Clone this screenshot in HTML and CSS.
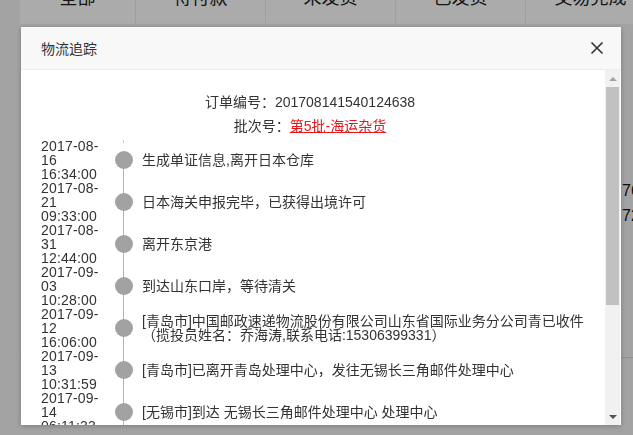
FILE: index.html
```html
<!DOCTYPE html>
<html lang="zh-CN">
<head>
    <meta charset="UTF-8">
    <meta name="viewport" content="width=device-width, initial-scale=1.0">
    <title>物流追踪</title>
    <link rel="stylesheet" href="styles.css">
</head>
<body>
    <!-- 订单列表页（被遮罩盖住） -->
    <div class="page">
        <ul class="tabs">
            <li>全部</li>
            <li>待付款</li>
            <li>未发货</li>
            <li>已发货</li>
            <li>交易完成</li>
        </ul>
        <div class="orders">
            <div class="order-row"><span></span><span class="price">76.00</span></div>
            <div class="order-row"><span></span><span class="price">72.00</span></div>
            <div class="order-sep"></div>
        </div>
    </div>

    <div class="mask"></div>

    <!-- 物流追踪弹窗 -->
    <div class="dialog">
        <div class="dialog-head">
            <span class="dialog-title">物流追踪</span>
            <span class="close">
                <svg width="14" height="14" viewBox="0 0 14 14"><path d="M1.5 1.5 L12.5 12.5 M12.5 1.5 L1.5 12.5" stroke="#333" stroke-width="1.6" fill="none"/></svg>
            </span>
        </div>
        <div class="dialog-body">
            <div class="dialog-content">
                <p class="info">订单编号：201708141540124638</p>
                <p class="info">批次号：<a href="#">第5批-海运杂货</a></p>

                <ul class="track">
                    <li class="track-item">
                        <div class="date">2017-08-<br>16<br>16:34:00</div>
                        <div class="node"><span class="dot"></span></div>
                        <div class="desc">生成单证信息,离开日本仓库</div>
                    </li>
                    <li class="track-item">
                        <div class="date">2017-08-<br>21<br>09:33:00</div>
                        <div class="node"><span class="dot"></span></div>
                        <div class="desc">日本海关申报完毕，已获得出境许可</div>
                    </li>
                    <li class="track-item">
                        <div class="date">2017-08-<br>31<br>12:44:00</div>
                        <div class="node"><span class="dot"></span></div>
                        <div class="desc">离开东京港</div>
                    </li>
                    <li class="track-item">
                        <div class="date">2017-09-<br>03<br>10:28:00</div>
                        <div class="node"><span class="dot"></span></div>
                        <div class="desc">到达山东口岸，等待清关</div>
                    </li>
                    <li class="track-item">
                        <div class="date">2017-09-<br>12<br>16:06:00</div>
                        <div class="node"><span class="dot"></span></div>
                        <div class="desc">[青岛市]中国邮政速递物流股份有限公司山东省国际业务分公司青已收件<br>（揽投员姓名：乔海涛,联系电话:15306399331）</div>
                    </li>
                    <li class="track-item">
                        <div class="date">2017-09-<br>13<br>10:31:59</div>
                        <div class="node"><span class="dot"></span></div>
                        <div class="desc">[青岛市]已离开青岛处理中心，发往无锡长三角邮件处理中心</div>
                    </li>
                    <li class="track-item">
                        <div class="date">2017-09-<br>14<br>06:11:33</div>
                        <div class="node"><span class="dot"></span></div>
                        <div class="desc">[无锡市]到达 无锡长三角邮件处理中心 处理中心</div>
                    </li>
                    <li class="track-item">
                        <div class="date">2017-09-<br>14<br>18:40:12</div>
                        <div class="node"><span class="dot"></span></div>
                        <div class="desc">[无锡市]已离开无锡长三角邮件处理中心</div>
                    </li>
                </ul>
            </div>
            <div class="scrollbar">
                <span class="sb-btn"><i class="arrow-up"></i></span>
                <span class="sb-track"><span class="sb-thumb"></span></span>
                <span class="sb-btn"><i class="arrow-down"></i></span>
            </div>
        </div>
    </div>
</body>
</html>
```

FILE: styles.css
```css
body {
    margin: 0;
    height: 435px;
    overflow: hidden;
    background-color: #f4f4f4;
    font-family: 'Liberation Sans', 'Noto Sans CJK SC', sans-serif;
    color: #333;
}

.page {
    width: 680px;
    padding-left: 20px;
}

.tabs {
    display: flex;
    margin: -22px 0 0 0;
    padding: 0;
    list-style: none;
    background-color: #fff;
}

.tabs li {
    width: 130px;
    height: 46px;
    line-height: 40px;
    text-align: center;
    font-size: 18px;
    color: #222;
    border-right: 1px solid #eee;
    box-sizing: border-box;
}

.tabs li:first-child {
    width: 116px;
}

.orders {
    padding-top: 154px;
}

.order-row {
    display: grid;
    grid-template-columns: 602px 1fr;
    height: 25px;
    line-height: 25px;
    font-size: 16px;
    color: #111;
}

.order-sep {
    margin-top: 129px;
    border-top: 1px solid #d8d8d8;
}

.mask {
    position: fixed;
    top: 0;
    left: 0;
    right: 0;
    bottom: 0;
    background-color: rgba(0, 0, 0, 0.33);
}

.dialog {
    position: fixed;
    top: 27px;
    left: 21px;
    width: 600px;
    height: 398px;
    background-color: #fff;
    box-shadow: 0 1px 6px rgba(0, 0, 0, 0.25);
    display: flex;
    flex-direction: column;
}

.dialog-head {
    height: 42px;
    flex: none;
    display: flex;
    align-items: center;
    justify-content: space-between;
    padding: 0 17px 0 20px;
    background-color: #f8f8f8;
    border-bottom: 1px solid #ececec;
}

.dialog-title {
    font-size: 14px;
    color: #333;
}

.close {
    display: flex;
    cursor: pointer;
}

.dialog-body {
    flex: 1;
    display: flex;
    min-height: 0;
}

.dialog-content {
    flex: 1;
    overflow: hidden;
    padding: 20px 0 0 20px;
}

.info {
    margin: 0;
    line-height: 24px;
    font-size: 14px;
    text-align: center;
    padding-right: 26px;
}

.info a {
    color: #e8161b;
    text-decoration: underline;
}

.track {
    list-style: none;
    margin: 1px 0 0 0;
    padding: 0;
}

.track-item {
    display: flex;
    min-height: 42px;
}

.date {
    width: 64px;
    flex: none;
    font-size: 14px;
    line-height: 14px;
    letter-spacing: 0.2px;
    display: flex;
    align-items: center;
}

.node {
    width: 37px;
    flex: none;
    position: relative;
    display: flex;
    align-items: center;
    justify-content: center;
}

.node::before {
    content: "";
    position: absolute;
    left: 18px;
    top: 0;
    bottom: 0;
    width: 1px;
    background-color: #b4b4b4;
}

.track-item:first-child .node::before {
    top: 50%;
}

.track-item:first-child .node::after {
    content: "";
    position: absolute;
    left: 18px;
    top: 1px;
    height: 3px;
    width: 1px;
    background-color: #c8c8c8;
}

.dot {
    position: relative;
    width: 18px;
    height: 18px;
    border-radius: 50%;
    background-color: #a2a2a2;
}

.desc {
    flex: 1;
    display: flex;
    align-items: center;
    font-size: 14px;
    line-height: 14px;
    padding-right: 8px;
}

.scrollbar {
    width: 15px;
    margin-right: 1px;
    flex: none;
    display: flex;
    flex-direction: column;
    background-color: #f1f1f1;
}

.sb-btn {
    height: 17px;
    flex: none;
    display: flex;
    align-items: center;
    justify-content: center;
}

.sb-track {
    flex: 1;
}

.sb-thumb {
    display: block;
    height: 218px;
    margin: 0 1px;
    background-color: #c1c1c1;
}

.arrow-up {
    border-left: 4px solid transparent;
    border-right: 4px solid transparent;
    border-bottom: 4px solid #a3a3a3;
}

.arrow-down {
    border-left: 4px solid transparent;
    border-right: 4px solid transparent;
    border-top: 4px solid #505050;
}
```
